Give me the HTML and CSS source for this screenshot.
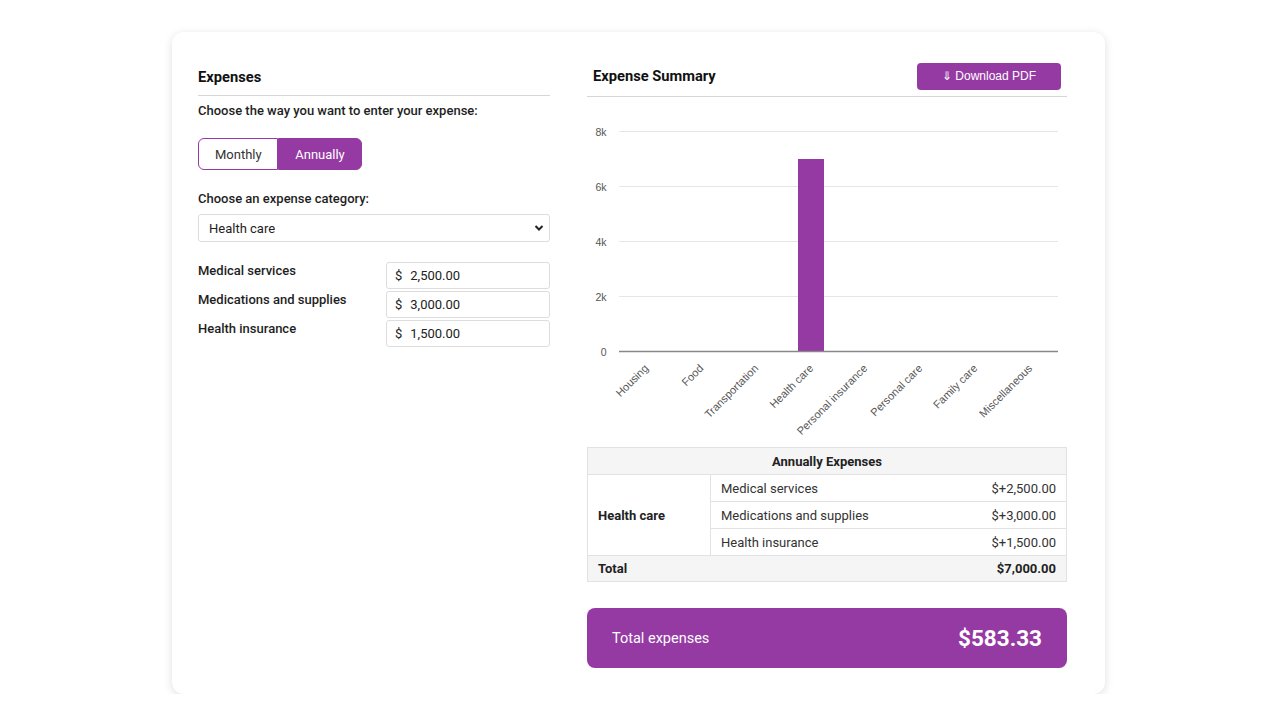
FILE: index.html
```html
<!DOCTYPE html>
<html>
<head>
<meta charset="utf-8">
<link rel="stylesheet" href="styles.css">
</head>
<body>
<div class="card">
  <section class="left">
    <div class="head"><h2>Expenses</h2></div>
    <p class="label">Choose the way you want to enter your expense:</p>
    <div class="toggle">
      <button class="tbtn">Monthly</button>
      <button class="tbtn active">Annually</button>
    </div>
    <p class="label cat">Choose an expense category:</p>
    <div class="select">
      <span>Health care</span>
      <svg width="10" height="8" viewBox="0 0 10 8"><path d="M1.5 2 L5 5.5 L8.5 2" fill="none" stroke="#222" stroke-width="2"/></svg>
    </div>
    <div class="rows">
      <div class="row"><span class="rl">Medical services</span><div class="inp"><span class="cur">$</span>2,500.00</div></div>
      <div class="row"><span class="rl">Medications and supplies</span><div class="inp"><span class="cur">$</span>3,000.00</div></div>
      <div class="row"><span class="rl">Health insurance</span><div class="inp"><span class="cur">$</span>1,500.00</div></div>
    </div>
  </section>
  <section class="right">
    <div class="head rhead"><h2>Expense Summary</h2><button class="dl">&#8659; Download PDF</button></div>
    <svg class="chart" width="480" height="350" viewBox="0 0 480 350">
      <g stroke="#e6e6e6" stroke-width="1">
        <line x1="32" y1="34.5" x2="471" y2="34.5"/>
        <line x1="32" y1="89.5" x2="471" y2="89.5"/>
        <line x1="32" y1="144.5" x2="471" y2="144.5"/>
        <line x1="32" y1="199.5" x2="471" y2="199.5"/>
      </g>
      <g class="ylab" text-anchor="end">
        <text x="19.5" y="38.5">8k</text>
        <text x="19.5" y="93.5">6k</text>
        <text x="19.5" y="148.5">4k</text>
        <text x="19.5" y="203.5">2k</text>
        <text x="19.5" y="258.5">0</text>
      </g>
      <rect x="211" y="62" width="26" height="192" fill="#953aa3"/>
      <line x1="32" y1="254.5" x2="471" y2="254.5" stroke="#888" stroke-width="1.3"/>
      <g class="xlab" text-anchor="end">
        <text transform="translate(62 272) rotate(-45)">Housing</text>
        <text transform="translate(117 272) rotate(-45)">Food</text>
        <text transform="translate(172 272) rotate(-45)">Transportation</text>
        <text transform="translate(227 272) rotate(-45)">Health care</text>
        <text transform="translate(281 272) rotate(-45)">Personal insurance</text>
        <text transform="translate(336 272) rotate(-45)">Personal care</text>
        <text transform="translate(391 272) rotate(-45)">Family care</text>
        <text transform="translate(446 272) rotate(-45)">Miscellaneous</text>
      </g>
    </svg>
    <table class="tbl">
      <tr class="th"><th colspan="3">Annually Expenses</th></tr>
      <tr><td class="cat" rowspan="3">Health care</td><td class="item">Medical services</td><td class="amt">$+2,500.00</td></tr>
      <tr><td class="item">Medications and supplies</td><td class="amt">$+3,000.00</td></tr>
      <tr><td class="item">Health insurance</td><td class="amt">$+1,500.00</td></tr>
      <tr class="tot"><td colspan="2" class="item">Total</td><td class="amt">$7,000.00</td></tr>
    </table>
    <div class="total">
      <span class="tl">Total expenses</span>
      <span class="tv">$583.33</span>
    </div>
  </section>
</div>
</body>
</html>
```

FILE: styles.css
```css
* { box-sizing: border-box; }
html, body { margin: 0; padding: 0; background: #fff; }
body {
  font-family: Roboto, "Liberation Sans", Arial, sans-serif;
  color: #222;
  padding-top: 32px;
}
.card {
  width: 933px;
  height: 662px;
  margin-left: 172px;
  background: #fff;
  border-radius: 12px;
  box-shadow: 0 2px 10px rgba(0,0,0,0.13);
  padding: 32px 38px 26px 26px;
  display: flex;
  gap: 37px;
}
.left { width: 352px; display: flex; flex-direction: column; }
.right { width: 480px; display: flex; flex-direction: column; }
.right > * { flex-shrink: 0; }
.head {
  height: 33px;
  padding-bottom: 5px;
  border-bottom: 1px solid #d6d6d6;
  display: flex;
  align-items: center;
  justify-content: space-between;
}
.left .head { height: 32px; }
.head h2 { margin: 0; font-size: 14.7px; font-weight: 700; color: #111; }
.rhead { padding-left: 6px; padding-right: 6px; }
.rhead h2 { margin-top: -3px; }
.label { margin: 5px 0 0; font-size: 13px; line-height: 20px; font-weight: 500; color: #1e1e1e; }
.label.cat { margin-top: 19px; }
.toggle { display: flex; margin-top: 17px; height: 32px; }
.tbtn {
  font-family: Roboto, sans-serif;
  font-size: 13px;
  border: 1px solid #953aa3;
  background: #fff;
  color: #333;
  padding: 0 16px;
  height: 32px;
  cursor: pointer;
}
.tbtn:first-child { border-radius: 6px 0 0 6px; width: 80px; }
.tbtn.active { background: #953aa3; color: #fff; border-radius: 0 6px 6px 0; width: 84px; }
.select {
  margin-top: 5px;
  height: 28px;
  border: 1px solid #ddd;
  border-radius: 3px;
  display: flex;
  align-items: center;
  justify-content: space-between;
  padding: 0 5px 0 10px;
  font-size: 13px;
  color: #222;
}
.rows { margin-top: 20px; display: flex; flex-direction: column; gap: 2px; }
.row { display: flex; justify-content: space-between; align-items: flex-start; height: 27px; }
.rl { font-size: 13px; font-weight: 500; line-height: 18px; color: #1e1e1e; }
.inp {
  width: 164px;
  height: 27px;
  border: 1px solid #ddd;
  border-radius: 3px;
  font-size: 13px;
  display: flex;
  align-items: center;
  padding-left: 8px;
  color: #222;
}
.cur { margin-right: 8px; }
.dl {
  width: 144px;
  height: 27px;
  background: #953aa3;
  color: #fff;
  border: none;
  border-radius: 4px;
  font-family: "Liberation Sans", Arial, sans-serif;
  font-size: 12px;
  margin-top: -3px;
}
.chart { display: block; }
.ylab text { font-family: "Liberation Sans", Arial, sans-serif; font-size: 10.5px; fill: #555; }
.xlab text { font-family: "Liberation Sans", Arial, sans-serif; font-size: 11px; fill: #555; }
.tbl {
  width: 480px;
  border-collapse: collapse;
  font-size: 13px;
  color: #333;
}
.tbl th, .tbl td {
  border: 1px solid #e2e2e2;
  height: 27px;
  padding: 0 10px;
  text-align: left;
}
.tbl td.item { border-right: 0; }
.tbl td.amt { text-align: right; border-left: 0; }
.tbl .th th { background: #f5f5f5; text-align: center; font-weight: 700; color: #222; }
.tbl td.cat { width: 123px; font-weight: 700; color: #222; }
.tbl .tot td { background: #f5f5f5; font-weight: 700; color: #222; height: 26px; }
.total {
  margin-top: 26px;
  height: 60px;
  background: #953aa3;
  border-radius: 8px;
  display: flex;
  align-items: center;
  justify-content: space-between;
  padding: 0 25px;
  color: #fff;
}
.tl { font-size: 14.5px; }
.tv { font-size: 22.5px; font-weight: 700; }
```
